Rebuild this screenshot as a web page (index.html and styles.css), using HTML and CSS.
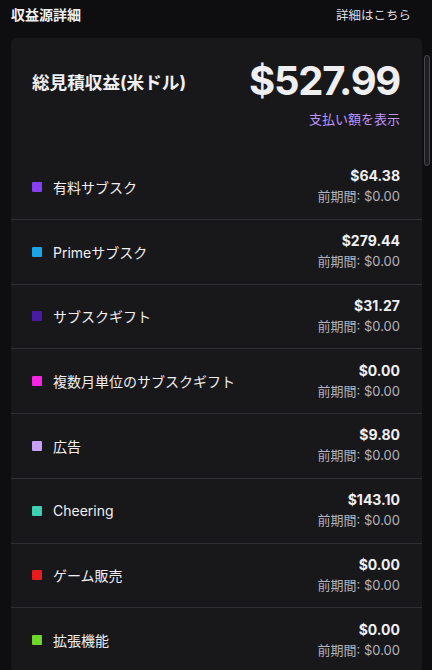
FILE: index.html
```html
<!DOCTYPE html>
<html lang="ja">
<head>
<meta charset="utf-8">
<link rel="stylesheet" href="styles.css">
</head>
<body>
<div class="page">
  <header class="top">
    <h1 class="title">収益源詳細</h1>
    <a class="more">詳細はこちら</a>
  </header>
  <section class="card">
    <div class="summary">
      <div class="sum-row">
        <div class="sum-label">総見積収益(米ドル)</div>
        <div class="sum-value">$527.99</div>
      </div>
      <a class="payout">支払い額を表示</a>
    </div>
    <ul class="rows">
      <li class="row"><span class="dot" style="background:#8440f0"></span><span class="label">有料サブスク</span><span class="amt"><b>$64.38</b><i>前期間: $0.00</i></span></li>
      <li class="row"><span class="dot" style="background:#1aa6e4"></span><span class="label">Primeサブスク</span><span class="amt"><b>$279.44</b><i>前期間: $0.00</i></span></li>
      <li class="row"><span class="dot" style="background:#4b1aa2"></span><span class="label">サブスクギフト</span><span class="amt"><b>$31.27</b><i>前期間: $0.00</i></span></li>
      <li class="row"><span class="dot" style="background:#f424e2"></span><span class="label">複数月単位のサブスクギフト</span><span class="amt"><b>$0.00</b><i>前期間: $0.00</i></span></li>
      <li class="row"><span class="dot" style="background:#c79ff7"></span><span class="label">広告</span><span class="amt"><b>$9.80</b><i>前期間: $0.00</i></span></li>
      <li class="row"><span class="dot" style="background:#3ccfb2"></span><span class="label">Cheering</span><span class="amt"><b>$143.10</b><i>前期間: $0.00</i></span></li>
      <li class="row"><span class="dot" style="background:#e81c1c"></span><span class="label">ゲーム販売</span><span class="amt"><b>$0.00</b><i>前期間: $0.00</i></span></li>
      <li class="row"><span class="dot" style="background:#6cd62a"></span><span class="label">拡張機能</span><span class="amt"><b>$0.00</b><i>前期間: $0.00</i></span></li>
    </ul>
  </section>
  <div class="scrollbar"></div>
</div>
</body>
</html>
```

FILE: styles.css
```css
* { box-sizing: border-box; }
html, body {
  margin: 0;
  padding: 0;
  background: #0e0e10;
  height: 100%;
  overflow: hidden;
}
body {
  font-family: "Inter", "Noto Sans CJK JP", sans-serif;
  color: #efeff1;
}
.page {
  position: relative;
  height: 670px;
}
.top {
  display: flex;
  justify-content: space-between;
  align-items: center;
  height: 38px;
  padding: 0 21px 10px 11px;
}
.title {
  margin: 0;
  font-size: 14px;
  font-weight: 700;
  color: #efeff1;
}
.more {
  font-size: 12.5px;
  color: #dedee3;
}
.card {
  margin: 0 10px 0 11px;
  background: #18181b;
  border-radius: 5px;
  overflow: hidden;
}
.summary {
  padding: 21px 22px 27px 21px;
}
.sum-row {
  display: flex;
  justify-content: space-between;
  align-items: center;
}
.sum-label {
  font-size: 17.6px;
  font-weight: 700;
}
.sum-value {
  font-size: 40px;
  font-weight: 700;
  letter-spacing: -1.3px;
  line-height: 44px;
}
.payout {
  display: block;
  text-align: right;
  font-size: 13px;
  color: #bf94ff;
  margin-top: 6px;
}
.rows {
  list-style: none;
  margin: 0;
  padding: 0;
}
.row {
  display: flex;
  align-items: center;
  height: 64.75px;
  padding: 0 22px 0 21px;
  border-bottom: 1px solid #2e2e33;
}
.dot {
  width: 10px;
  height: 10px;
  border-radius: 1px;
  margin-right: 11px;
  flex: none;
}
.label {
  flex: 1;
  font-size: 14px;
  color: #efeff1;
}
.amt {
  display: flex;
  flex-direction: column;
  align-items: flex-end;
}
.amt b {
  font-size: 14px;
  font-weight: 700;
  line-height: 20px;
}
.amt i {
  font-style: normal;
  font-size: 13px;
  color: #b3b3bd;
  line-height: 21px;
}
.scrollbar {
  position: absolute;
  left: 424px;
  top: 55px;
  width: 6px;
  height: 111px;
  border: 1px solid #45454b;
  border-radius: 3px;
  background: #1f1f23;
}
```
